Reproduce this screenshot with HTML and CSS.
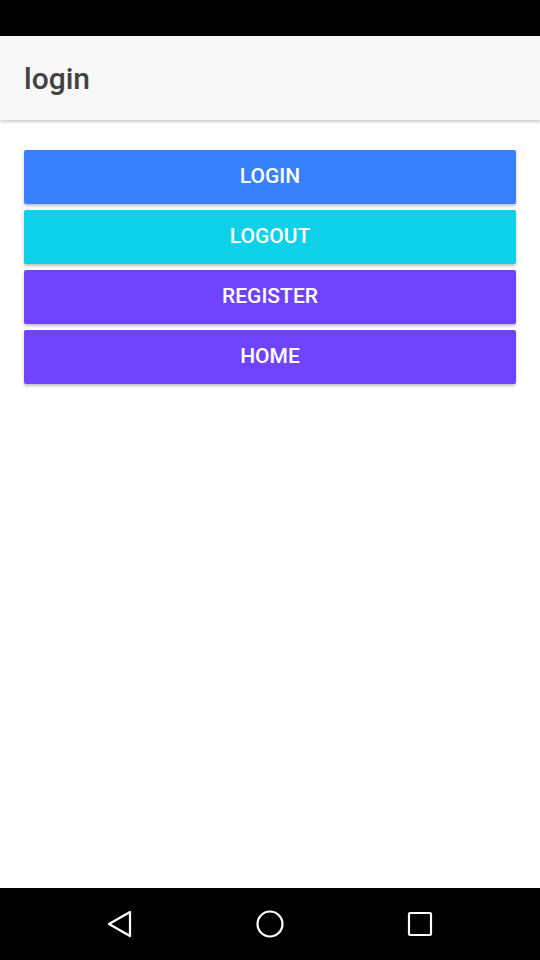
FILE: index.html
```html
<!DOCTYPE html>
<html>
<head>
<meta charset="utf-8">
<link rel="stylesheet" href="styles.css">
</head>
<body>
<div class="screen">
  <div class="statusbar"></div>
  <header class="toolbar"><h1 class="title">login</h1></header>
  <main class="content">
    <button class="btn btn-primary">LOGIN</button>
    <button class="btn btn-secondary">LOGOUT</button>
    <button class="btn btn-tertiary">REGISTER</button>
    <button class="btn btn-tertiary">HOME</button>
  </main>
  <nav class="navbar">
    <svg class="nav-icon" width="30" height="30" viewBox="0 0 30 30"><path d="M25 3 L4 15 L25 27 Z" fill="none" stroke="#fff" stroke-width="2.2" stroke-linejoin="round"/></svg>
    <svg class="nav-icon" width="30" height="30" viewBox="0 0 30 30"><circle cx="15" cy="15" r="12.5" fill="none" stroke="#fff" stroke-width="2.2"/></svg>
    <svg class="nav-icon" width="30" height="30" viewBox="0 0 30 30"><rect x="4" y="4" width="22" height="22" rx="1" fill="none" stroke="#fff" stroke-width="2.2"/></svg>
  </nav>
</div>
</body>
</html>
```
FILE: styles.css
```css
* { box-sizing: border-box; }
html, body { margin: 0; padding: 0; }
body { font-family: Roboto, "Noto Sans", sans-serif; background: #fff; }
.screen { width: 540px; height: 960px; display: flex; flex-direction: column; }
.statusbar { height: 36px; background: #000; flex: none; }
.toolbar { height: 84px; background: #f8f8f8; flex: none; display: flex; align-items: center; padding: 1px 24px 0; box-shadow: 0 2px 3px rgba(0,0,0,0.2); position: relative; z-index: 1; }
.title { margin: 0; font-size: 30px; font-weight: 500; color: #424242; }
.content { flex: 1; padding: 30px 24px 0; display: flex; flex-direction: column; gap: 6px; }
.btn { height: 54px; border: none; color: #fff; font-family: Roboto, sans-serif; font-size: 21px; font-weight: 500; border-radius: 2px; box-shadow: 0 2px 3px rgba(0,0,0,0.25); padding: 0 0 2px; }
.btn-primary { background: #3880ff; }
.btn-secondary { background: #0cd1e8; }
.btn-tertiary { background: #7044ff; }
.navbar { height: 72px; background: #000; flex: none; display: flex; justify-content: center; align-items: center; gap: 120px; }
.nav-icon { display: block; }
```
